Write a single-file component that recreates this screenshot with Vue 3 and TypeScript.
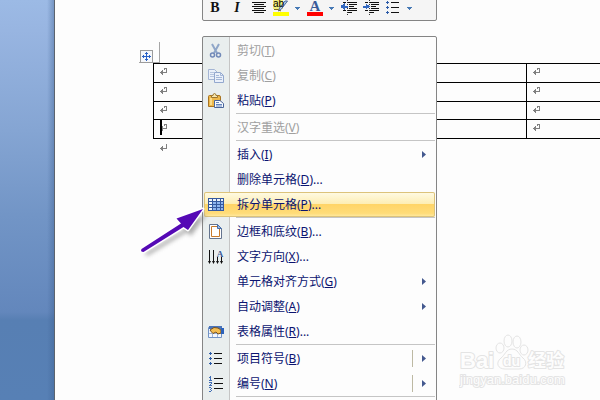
<script setup lang="ts">
interface MenuEntry {
  label: string
  key: string
  more?: boolean
  disabled?: boolean
  active?: boolean
  icon?: string
  sub?: boolean
  split?: boolean
}

const groups: MenuEntry[][] = [
  [
    { label: '剪切', key: 'T', disabled: true, icon: 'cut' },
    { label: '复制', key: 'C', disabled: true, icon: 'copy' },
    { label: '粘贴', key: 'P', icon: 'paste' },
  ],
  [{ label: '汉字重选', key: 'V', disabled: true }],
  [
    { label: '插入', key: 'I', sub: true },
    { label: '删除单元格', key: 'D', more: true },
    { label: '拆分单元格', key: 'P', more: true, active: true, icon: 'split' },
  ],
  [
    { label: '边框和底纹', key: 'B', more: true, icon: 'border' },
    { label: '文字方向', key: 'X', more: true, icon: 'direction' },
    { label: '单元格对齐方式', key: 'G', sub: true },
    { label: '自动调整', key: 'A', sub: true },
    { label: '表格属性', key: 'R', more: true, icon: 'props' },
  ],
  [
    { label: '项目符号', key: 'B', sub: true, split: true, icon: 'bullets' },
    { label: '编号', key: 'N', sub: true, split: true, icon: 'numbers' },
  ],
  [],
]

const rows = [0, 1, 2, 3]
</script>

<template>
  <div class="app">
    <aside class="desk"></aside>
    <main class="page">
      <svg class="corner" width="22" height="22" viewBox="0 0 22 22" shape-rendering="crispEdges" aria-hidden="true">
        <path d="M20.500 0V20.500H0" fill="none" stroke="#a6a6a6" />
        <rect x="1.500" y="8.500" width="12" height="12" fill="#f6f8fb" stroke="#9c9c9c" />
        <path d="M7 10h1v9h-1zM3 14h9v1h-9zM6 11h3v1h-3zM6 17h3v1h-3zM4 13h1v3h-1zM10 13h1v3h-1z" fill="#2a62c8" />
      </svg>
      <table class="grid" aria-label="文档表格">
        <tbody>
          <tr v-for="r in rows" :key="r">
            <td v-for="c in 3" :key="c">
              <i v-if="r === 3 && c === 1" class="caret"></i>
              <svg class="mark" width="8" height="8" viewBox="0 0 8 8" shape-rendering="crispEdges" aria-hidden="true">
                <path d="M4 0h3v1h-3zM6 1h1v4h-1zM1 4h6v1h-6zM0 4h1v1h-1zM1 3h2v3h-2zM2 2h1v5h-1zM4 1h1v1h-1z" fill="#808080" />
              </svg>
            </td>
          </tr>
        </tbody>
      </table>
      <svg class="mark after" width="8" height="8" viewBox="0 0 8 8" shape-rendering="crispEdges" aria-hidden="true">
        <path d="M6 0h1v5h-1zM0 4h6v1h-6zM1 3h2v3h-2zM2 2h1v5h-1z" fill="#808080" />
      </svg>
    </main>

    <div class="toolbar" role="toolbar" aria-label="格式">
      <button type="button" class="tool bold" aria-label="加粗">B</button>
      <button type="button" class="tool italic" aria-label="倾斜">I</button>
      <button type="button" class="tool" aria-label="居中">
        <svg width="16" height="16" shape-rendering="crispEdges"><path d="M1 2.500h14M3 4.500h10M1 6.500h14M3 8.500h10M1 10.500h14M3 12.500h10" stroke="#111" /></svg>
      </button>
      <button type="button" class="tool wide" aria-label="突出显示">
        <svg width="16" height="16">
          <rect width="10" height="9" fill="#f3ee7c" />
          <path d="M14.500 1L8 9.500 5.500 11 6.500 8 12 1Z" fill="#b9d1ec" stroke="#496b9c" />
          <path d="M1 9.500h4l3 1.500" stroke="#806c20" fill="none" />
          <text x="0" y="7" class="ab">ab</text>
          <rect y="12" width="16" height="4" fill="#ff0" />
        </svg>
        <svg class="drop" width="5" height="3" shape-rendering="crispEdges"><path d="M0 0H5L2.500 3Z" fill="#4679b5" /></svg>
      </button>
      <button type="button" class="tool wide" aria-label="字体颜色">
        <svg width="16" height="16">
          <text x="8" y="11" text-anchor="middle" class="letter">A</text>
          <rect y="12" width="16" height="4" fill="#f00" />
        </svg>
        <svg class="drop" width="5" height="3" shape-rendering="crispEdges"><path d="M0 0H5L2.500 3Z" fill="#4679b5" /></svg>
      </button>
      <button type="button" class="tool" aria-label="减少缩进">
        <svg width="16" height="16" shape-rendering="crispEdges">
          <path d="M2 2.500h3M7 2.500h9M8 4.500h8M8 6.500h5M8 8.500h8M2 10.500h3M7 10.500h9M7 12.500h4" stroke="#111" />
          <path d="M6.500 0v16" stroke="#333" stroke-dasharray="1 1" />
          <path d="M0 6.500L3 4V6H6V7H3V9Z" fill="#3268c0" stroke="#3268c0" />
        </svg>
      </button>
      <button type="button" class="tool" aria-label="增加缩进">
        <svg width="16" height="16" shape-rendering="crispEdges">
          <path d="M2 2.500h3M7 2.500h9M8 4.500h8M8 6.500h5M8 8.500h8M2 10.500h3M7 10.500h9M7 12.500h4" stroke="#111" />
          <path d="M6.500 0v16" stroke="#333" stroke-dasharray="1 1" />
          <path d="M6 6.500L3 4V6H0V7H3V9Z" fill="#3268c0" stroke="#3268c0" />
        </svg>
      </button>
      <button type="button" class="tool wide" aria-label="项目符号列表">
        <svg width="16" height="16" shape-rendering="crispEdges">
          <path d="M2 1h1v1h1v1h-1v1h-1v-1h-1v-1h1zM2 6h1v1h1v1h-1v1h-1v-1h-1v-1h1zM2 11h1v1h1v1h-1v1h-1v-1h-1v-1h1z" fill="#2c5ba8" />
          <path d="M6 2.500h8M6 7.500h8M6 12.500h8" stroke="#111" />
        </svg>
        <svg class="drop" width="5" height="3" shape-rendering="crispEdges"><path d="M0 0H5L2.500 3Z" fill="#4679b5" /></svg>
      </button>
    </div>

    <div class="menu" role="menu">
      <div v-for="(group, g) in groups" :key="g" class="group" role="group">
        <button
          v-for="item in group"
          :key="item.label"
          type="button"
          role="menuitem"
          class="item"
          :class="{ active: item.active }"
          :disabled="item.disabled"
        >
          <span class="icon">
            <svg v-if="item.icon === 'cut'" width="16" height="16" viewBox="0 0 16 16" fill="none">
              <path d="M4 1L9 10M11 1L6 10" stroke="#8fa6c8" stroke-width="2" />
              <circle cx="4.500" cy="12" r="2" stroke="#7189b8" stroke-width="1.500" />
              <circle cx="10.500" cy="12" r="2" stroke="#7189b8" stroke-width="1.500" />
            </svg>
            <svg v-else-if="item.icon === 'copy'" width="16" height="16" viewBox="0 0 16 16">
              <path d="M.5 1.500H6.500L9.500 4.500V11.500H.5Z" fill="#eaf0fa" stroke="#a4b5d4" />
              <path d="M2 4.500h4M2 6.500h5M2 8.500h5" stroke="#b6c5df" />
              <path d="M6.500 4.500H12.500L15.500 7.500V14.500H6.500Z" fill="#eaf0fa" stroke="#93a8ce" />
              <path d="M12.500 4.500V7.500H15.500M8 7.500h3M8 9.500h6M8 11.500h6" fill="none" stroke="#a4b7d8" />
            </svg>
            <svg v-else-if="item.icon === 'paste'" width="16" height="16" viewBox="0 0 16 16">
              <path d="M.5 3.500Q.5 2.500 1.500 2.500H11Q12.500 2.500 12.500 4V13.500H.5Z" fill="#edb84b" stroke="#a87321" />
              <path d="M2 5h2v7h-2z" fill="#fbdc8c" />
              <path d="M3.500 4.500V2.500H5Q5 .5 6.500 .5T8 2.500H9.500V4.500Z" fill="#f7e8b1" stroke="#9b7631" />
              <path d="M6.500 7.500H12L15.500 10.500V14.500H6.500Z" fill="#f7faff" stroke="#4a659b" />
              <path d="M8 9.500h3M8 11.500h6M8 13h6" stroke="#6586bd" />
            </svg>
            <svg v-else-if="item.icon === 'split'" width="16" height="13" viewBox="0 0 16 13" shape-rendering="crispEdges">
              <rect width="16" height="13" fill="#35599e" />
              <path d="M1 1h3v2h-3zM5 1h3v2h-3zM9 1h3v2h-3zM13 1h2v2h-2zM1 4h3v2h-3zM1 7h3v2h-3zM1 10h3v2h-3z" fill="#edf3fc" />
              <path d="M5 4h3v2h-3zM9 4h3v2h-3zM13 4h2v2h-2zM5 7h3v2h-3zM9 7h3v2h-3zM13 7h2v2h-2zM5 10h3v2h-3zM9 10h3v2h-3zM13 10h2v2h-2z" fill="#8eb5ef" />
            </svg>
            <svg v-else-if="item.icon === 'border'" width="16" height="16" viewBox="0 0 16 16">
              <path d="M1.500 .5H9.500L13.500 4.500V14.500H1.500Z" fill="#fff" stroke="#64748e" />
              <path d="M9 2.500H3.500V12.500H11.500V5" fill="none" stroke="#c87b2c" />
              <path d="M9.500 .5V4.500H13.500Z" fill="#9ab9e4" stroke="#486fa8" />
            </svg>
            <svg v-else-if="item.icon === 'direction'" width="16" height="16" viewBox="0 0 16 16">
              <path d="M1.500 1V14M5.500 1V14M9.500 8V14M13.500 8V14" stroke="#111" />
              <path d="M0 12h3l-1.500 3zM4 12h3l-1.500 3zM8 12h3l-1.500 3zM12 12h3l-1.500 3z" fill="#111" />
              <text x="12" y="8" text-anchor="middle" class="small-a">A</text>
            </svg>
            <svg v-else-if="item.icon === 'props'" width="16" height="14" viewBox="0 0 16 14">
              <path d="M.5 2.500H13.500V12.500H.5Z" fill="#f2f7ff" stroke="#7192c6" />
              <path d="M1 1h13v3h-13z" fill="#4a74b9" />
              <path d="M1 8.500h12M4.500 4v8M9.500 4v8" stroke="#9bb4da" />
              <path d="M2 5L6 2.500 10 3 13 5V8L10 9 8 7 5 8.500 3.500 7Z" fill="#f3bd52" stroke="#79511d" />
              <path d="M13 3h3v6h-3z" fill="#2c62bb" />
            </svg>
            <svg v-else-if="item.icon === 'bullets'" width="16" height="16" viewBox="0 0 16 16" shape-rendering="crispEdges">
              <path d="M2 1h1v1h1v1h-1v1h-1v-1h-1v-1h1zM2 6h1v1h1v1h-1v1h-1v-1h-1v-1h1zM2 11h1v1h1v1h-1v1h-1v-1h-1v-1h1z" fill="#2c5ba8" />
              <path d="M6 2.500h8M6 7.500h8M6 12.500h8" stroke="#111" />
            </svg>
            <svg v-else-if="item.icon === 'numbers'" width="16" height="16" viewBox="0 0 16 16" shape-rendering="crispEdges">
              <path d="M1 1.500h1M2.500 0v4M1 4.500h3M1 6.500h2M3.500 6v2M2.500 8v1M1 9.500h3M1 11.500h2M3.500 12v1M2 13.500h1M3.500 14v1M1 15.500h2" fill="none" stroke="#3f6cb4" />
              <path d="M6 2.500h9M6 7.500h9M6 12.500h9" stroke="#111" />
            </svg>
          </span>
          <span class="text">{{ item.label }}(<u>{{ item.key }}</u>){{ item.more ? '...' : '' }}</span>
          <span v-if="item.split" class="divider"></span>
          <svg v-if="item.sub" class="arrow" width="4" height="7" viewBox="0 0 4 7" aria-hidden="true">
            <path d="M0 0L4 3.500L0 7Z" fill="#44598f" />
          </svg>
        </button>
      </div>
    </div>

    <svg class="pointer" width="80" height="64" viewBox="0 0 80 64" aria-hidden="true">
      <path d="M5 50L45 26L41 21L67 11L51 33L47 29L7 53Z" transform="translate(3 4)" class="shade" />
      <path d="M4.500 50L44 24.500L39.500 19.500L66 10L51 31L46.500 28L6.500 53Q3 53 4.500 50Z" fill="#5509b5" stroke="#fff" stroke-width="3" paint-order="stroke" stroke-linejoin="round" />
    </svg>

    <svg class="brand" width="112" height="56" viewBox="0 0 112 56" role="img" aria-label="Baidu 经验">
      <g class="outline">
        <ellipse cx="41" cy="14" rx="4" ry="5" />
        <ellipse cx="49" cy="7" rx="4" ry="6" />
        <ellipse cx="58" cy="8" rx="4" ry="6" />
        <ellipse cx="65" cy="16" rx="4" ry="5" />
        <path d="M53 15C47 15 46 21 42 24C36 29 39 35 46 35H60C67 35 69 28 64 24C60 21 59 15 53 15Z" />
        <text x="1" y="34" class="latin">Bai</text>
        <text x="44" y="32" class="du">du</text>
        <text x="69" y="33" class="han">经验</text>
        <text x="1" y="50" class="url">jingyan.baidu.com</text>
      </g>
    </svg>
  </div>
</template>

<style>
body {
  margin: 0;
}
</style>

<style scoped>
.app {
  position: relative;
  display: flex;
  min-height: 100vh;
  overflow: hidden;
  background: #fdfdfd;
  font: 12px/24px "Noto Sans", "Noto Sans CJK SC", sans-serif;
}
.desk {
  flex: 0 0 54px;
  border-right: 1px solid #5c646f;
  background:
    linear-gradient(90deg, transparent 47px, rgba(60, 95, 145, 0.4)),
    linear-gradient(#9cbae5 0, #98b5e1 30px, #85a5d3 130px, #7295c6 215px, #6387bc 312px, #577fb3 320px, #5780b5 400px);
}
.page {
  flex: 1;
  min-width: 0;
  padding: 42px 0 0 84px;
}
.corner {
  display: block;
  margin-bottom: -1px;
}
.grid {
  width: calc(100% + 100px);
  margin-left: 14px;
  border-collapse: collapse;
  table-layout: fixed;
}
.grid td {
  position: relative;
  box-sizing: border-box;
  height: 19px;
  padding: 0 6px;
  border: 1px solid #000;
  line-height: 0;
}
.grid tr:nth-child(3) td {
  height: 18px;
}
.mark {
  display: block;
}
.grid .mark {
  margin-bottom: 2px;
}
.after {
  margin: 5px 0 0 21px;
}
.caret {
  position: absolute;
  top: 0;
  left: 6px;
  width: 2px;
  height: 15px;
  background: #000;
}
.toolbar {
  position: absolute;
  top: -5px;
  left: 202px;
  display: flex;
  gap: 6px;
  box-sizing: border-box;
  width: 235px;
  height: 26px;
  padding: 4px 0 0 4px;
  border: 1px solid #858585;
  border-radius: 2px;
  background: #f5f5f5;
}
.tool {
  display: flex;
  flex: none;
  width: 16px;
  height: 16px;
  padding: 0;
  border: 0;
  background: none;
  color: #111;
}
.tool.wide {
  gap: 6px;
  width: 28px;
}
.tool.bold,
.tool.italic {
  justify-content: center;
  font: 900 14px/16px "Liberation Serif", serif;
}
.tool.italic {
  font-style: italic;
}
.drop {
  align-self: center;
}
.ab {
  font: 10px "Liberation Sans", sans-serif;
}
.letter {
  font: bold 15px "Liberation Serif", serif;
  fill: #3a5b99;
}
.small-a {
  font: bold 9px "Liberation Serif", serif;
  fill: #3a5b99;
}
.menu {
  position: absolute;
  top: 36px;
  left: 202px;
  box-sizing: border-box;
  width: 235px;
  padding: 1px 1px 24px;
  border: 1px solid #858585;
  border-radius: 2px;
  background: linear-gradient(90deg, #e9eeee 26px, #c5c5c5 26px, #c5c5c5 27px, #fdfdfd 27px);
}
.group + .group {
  padding-top: 2px;
  background: linear-gradient(#c5c5c5, #c5c5c5) 32px 0 / 100% 1px no-repeat;
}
.item {
  display: flex;
  align-items: center;
  width: 100%;
  height: 25px;
  padding: 0 9px 0 4px;
  border: 0;
  background: none;
  color: #0b1470;
  font: inherit;
  text-align: left;
}
.item:disabled {
  color: #a0a0a0;
}
.item.active {
  border-radius: 2px;
  background: linear-gradient(#fffbe6 0, #fdeeb5 46%, #ffd466 48%, #ffdc79 85%, #ffeca8);
  box-shadow: inset 0 0 0 1px #dcc37b;
}
.icon {
  display: flex;
  flex: 0 0 29px;
}
.text {
  flex: 1;
  white-space: nowrap;
}
.divider {
  width: 1px;
  height: 17px;
  margin-right: 9px;
  background: #bdb9a3;
}
.pointer {
  position: absolute;
  top: 199px;
  left: 137px;
}
.shade {
  fill: #777;
  opacity: 0.6;
  filter: blur(2px);
}
.brand {
  position: absolute;
  top: 334px;
  right: 29px;
}
.outline {
  fill: #fdfdfd;
  stroke: #e4e4e4;
  stroke-width: 1px;
}
.outline text {
  stroke-width: 2px;
  stroke-linejoin: round;
  paint-order: stroke;
}
.latin {
  font: bold 22px "Liberation Sans", sans-serif;
}
.du {
  font: bold 14px "Liberation Sans", sans-serif;
}
.han {
  font: bold 18px "Noto Sans CJK SC", sans-serif;
}
.url {
  font: 13px "Liberation Sans", sans-serif;
}
</style>
